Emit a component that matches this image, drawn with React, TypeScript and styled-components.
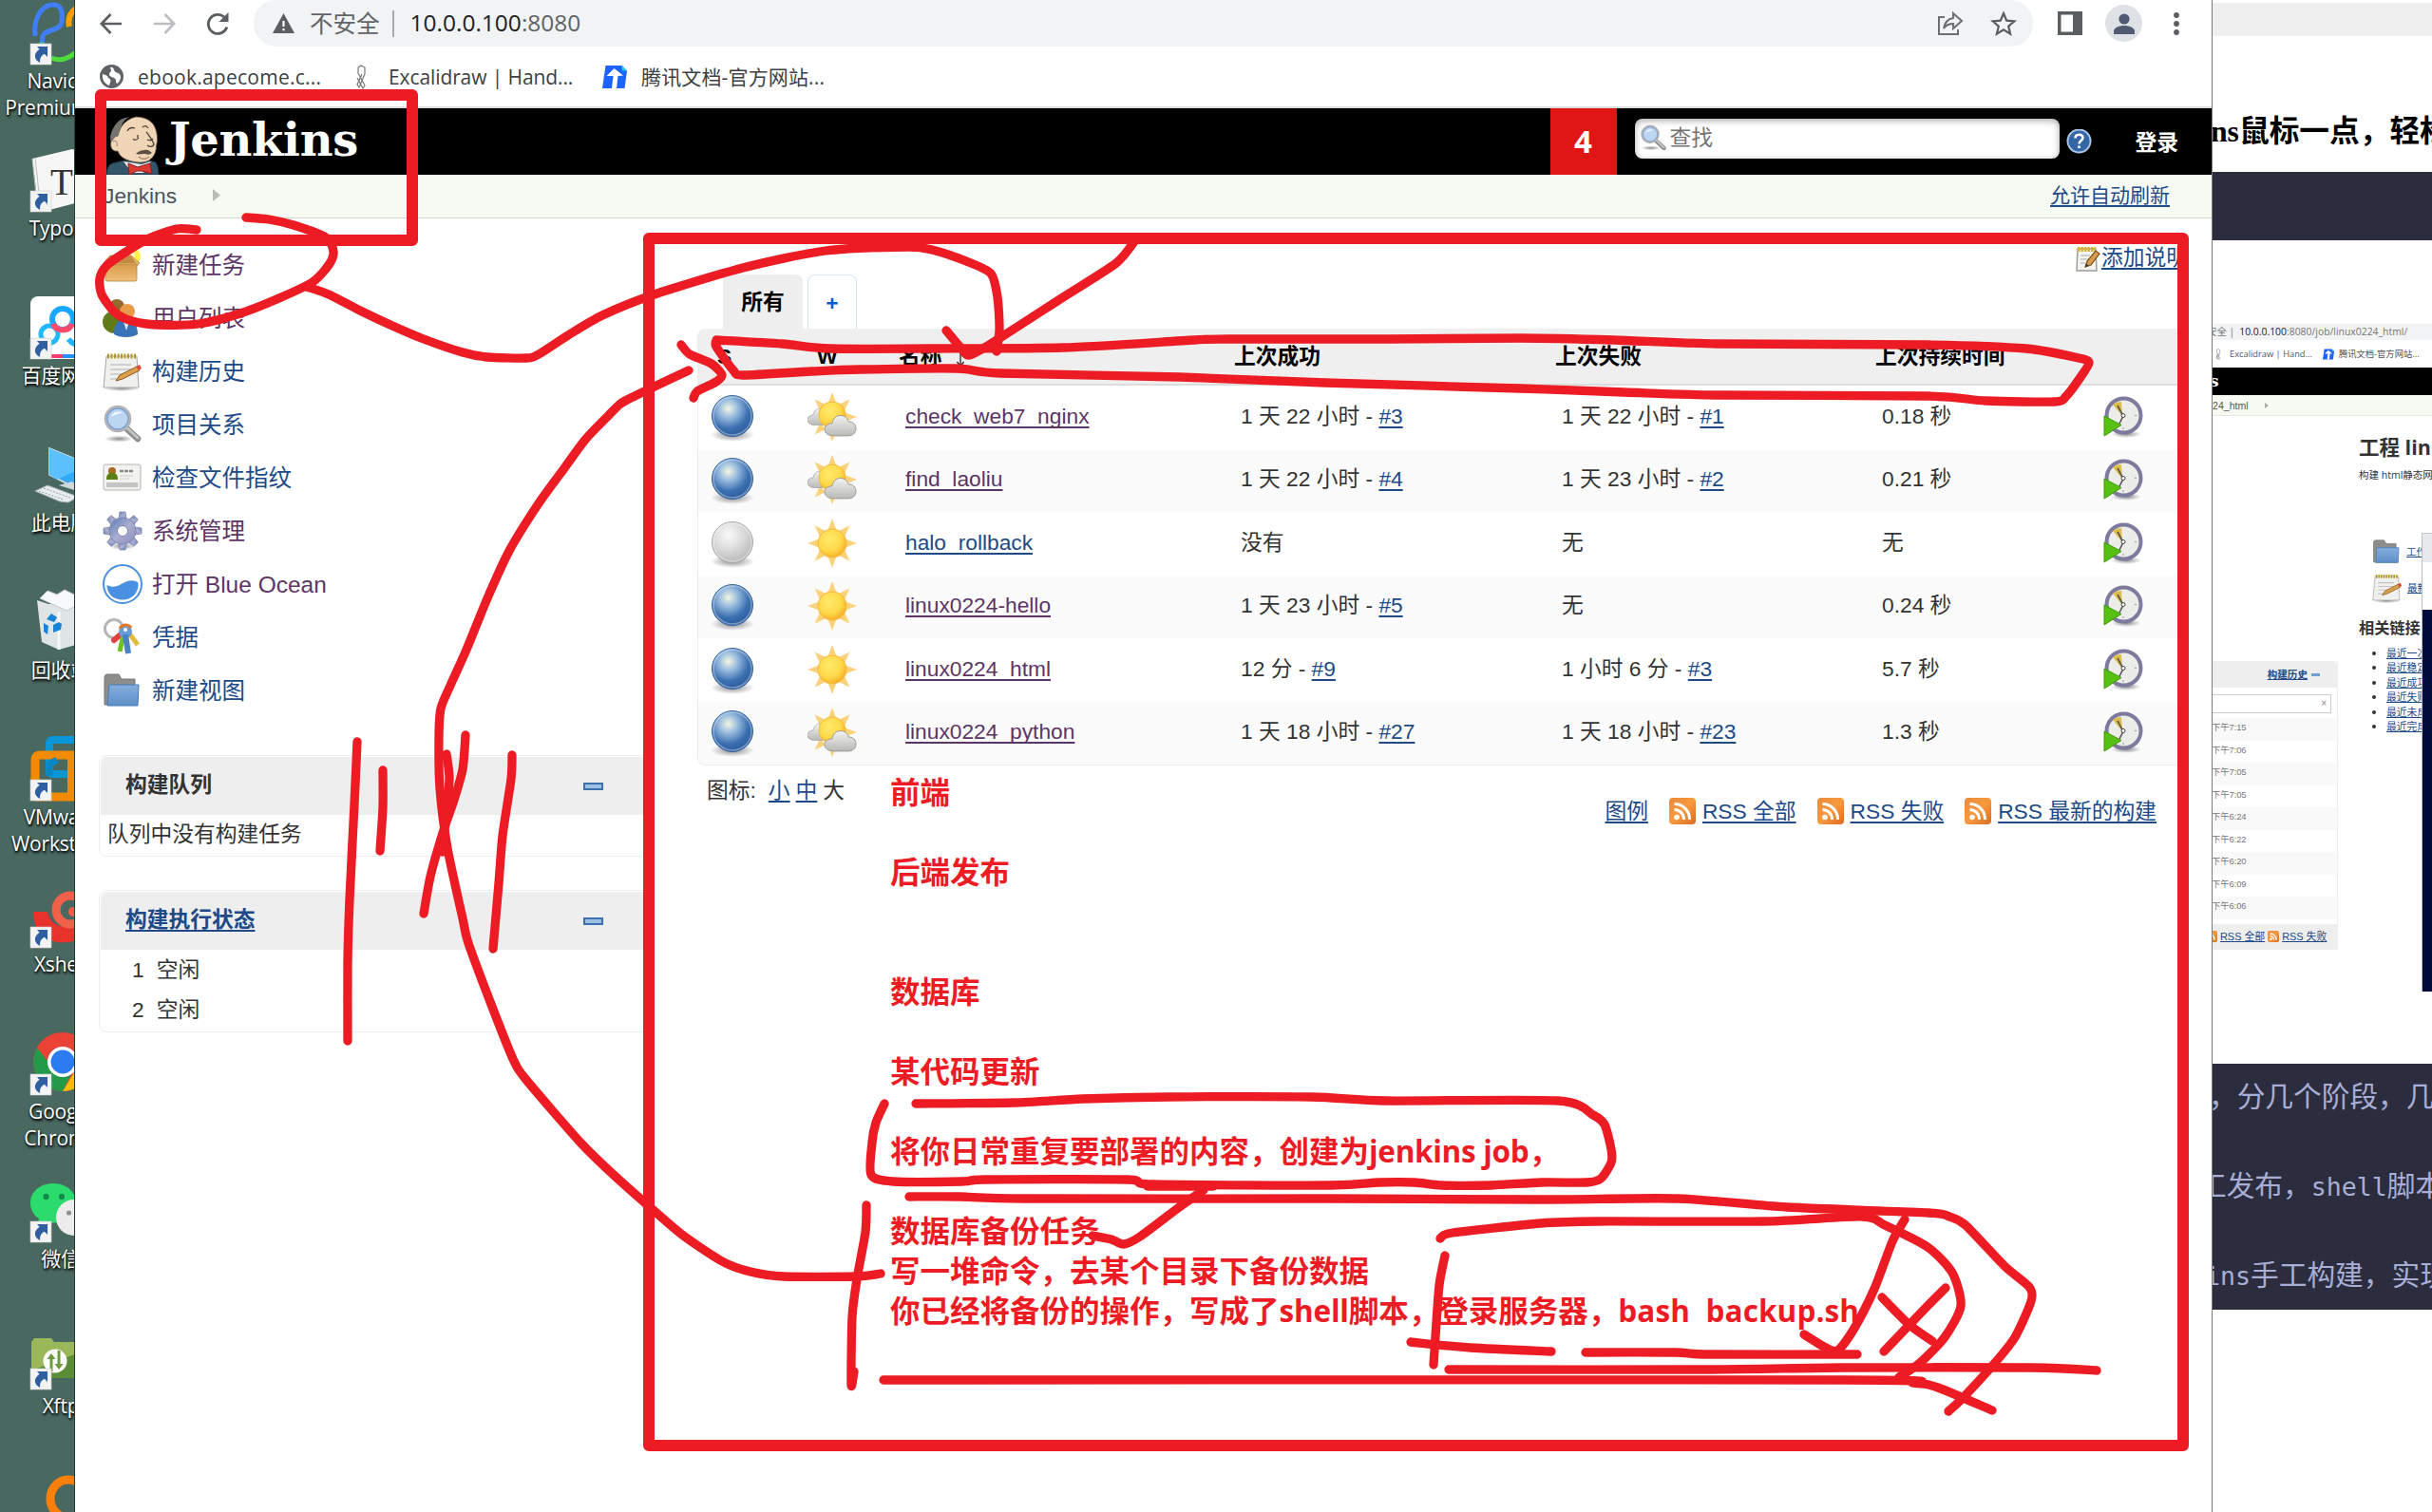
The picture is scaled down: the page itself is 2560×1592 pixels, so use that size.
import React from "react";
import styled, { createGlobalStyle } from "styled-components";

const UI = `"Open Sans", "Noto Sans CJK SC", sans-serif`;
const PAGE = `"Liberation Sans", "Noto Sans CJK SC", sans-serif`;
const CJK = `"Noto Sans CJK SC", sans-serif`;
const RED = "#ed1c24";

const GlobalStyle = createGlobalStyle`
  html, body { margin: 0; padding: 0; background: #fff; }
  body { width: 2560px; height: 1592px; overflow: hidden; }
  * { box-sizing: border-box; }
  svg { display: block; flex: none; }
`;

/* ---------- shell ---------- */

const Screen = styled.div`
  position: relative;
  display: flex;
  width: 2560px;
  height: 1592px;
  overflow: hidden;
  background: #fff;
`;

const Desktop = styled.aside`
  flex: none;
  width: 78px;
  height: 1592px;
  padding-top: 4px;
  overflow: hidden;
  background: #49685f;
`;

const DesktopItem = styled.div`
  display: flex;
  flex-direction: column;
  align-items: center;
  width: 128px;
  height: 155px;
`;

const DesktopLabel = styled.div`
  margin-top: 3px;
  font: 21px/28px ${UI};
  letter-spacing: -0.2px;
  color: #fff;
  text-align: center;
  white-space: pre;
  text-shadow: 1px 2px 3px #000, 0 1px 2px rgba(0, 0, 0, 0.8);
`;

const Browser = styled.section`
  flex: none;
  display: flex;
  flex-direction: column;
  width: 2251px;
  height: 1592px;
  border-left: 1px solid #2a3a36;
  border-right: 1px solid #7b7b7b;
  background: #fff;
`;

/* ---------- browser chrome ---------- */

const Toolbar = styled.div`
  display: flex;
  align-items: center;
  height: 49px;
  padding-left: 24px;
`;

const NavIcons = styled.div`
  display: flex;
  gap: 28px;
  margin-right: 24px;
`;

const AddressBar = styled.div`
  display: flex;
  align-items: center;
  width: 1873px;
  height: 49px;
  padding: 0 17px 0 20px;
  border-radius: 24px;
  background: #f1f3f4;
  font: 24.5px/48px ${UI};
  color: #5f6368;
`;

const Insecure = styled.span`
  margin: -1px 0 0 16px;
  font-family: ${CJK};
`;

const AddressDivider = styled.i`
  width: 2px;
  height: 28px;
  margin: 0 17px 0 13px;
  background: #a6a9ad;
`;

const Url = styled.span`
  flex: 1;
  margin-top: -2px;
  letter-spacing: 0;
`;

const Host = styled.span`
  color: #202124;
`;

const BarIcons = styled.div`
  display: flex;
  gap: 28px;
`;

const WindowIcons = styled.div`
  display: flex;
  align-items: center;
  margin-left: 26px;
  gap: 24px;
`;

const Avatar = styled.div`
  display: flex;
  align-items: center;
  justify-content: center;
  width: 39px;
  height: 39px;
  border-radius: 50%;
  background: #dee1e6;
`;

const Bookmarks = styled.div`
  display: flex;
  align-items: center;
  height: 63px;
  padding-left: 26px;
  font: 21px/30px ${UI};
  color: #3c4043;
`;

const Bookmark = styled.div<{ $w: number; $gap: number; $ls: number }>`
  display: flex;
  align-items: center;
  gap: ${(p) => p.$gap}px;
  width: ${(p) => p.$w}px;
  letter-spacing: ${(p) => p.$ls}px;
  white-space: nowrap;
`;

/* ---------- Jenkins header ---------- */

const JHeader = styled.header`
  display: flex;
  align-items: center;
  height: 72px;
  padding-left: 31px;
  border-top: 2px solid #dadce0;
  background: #000;
`;

const Wordmark = styled.div`
  flex: 1;
  margin: -5px 0 0 10px;
  font: bold 48px/60px "DejaVu Serif", serif;
  letter-spacing: -0.4px;
  color: #fff;
`;

const AlertCount = styled.div`
  width: 70px;
  height: 70px;
  background: #e01616;
  font: bold 33px/69px ${UI};
  text-align: center;
  color: #fff;
`;

const SearchBox = styled.div`
  display: flex;
  align-items: center;
  gap: 3px;
  width: 447px;
  height: 42px;
  margin: -7px 7px 0 19px;
  padding-left: 5px;
  border-radius: 8px;
  background: #fff;
  box-shadow: inset 0 2px 7px rgba(0, 0, 0, 0.35);
  font: 22.75px/38px ${PAGE};
  color: #757575;
`;

const SearchHint = styled.span`
  margin-top: -2px;
`;

const Login = styled.div`
  margin: 2px 35px 0 46px;
  font: bold 22.75px/30px ${PAGE};
  color: #fff;
`;

const Crumbs = styled.nav`
  display: flex;
  align-items: center;
  justify-content: space-between;
  height: 46px;
  padding: 0 44px 2px 31px;
  border-bottom: 1px solid #d3d7cf;
  background: #f6faf2;
  font: 22.75px/30px ${PAGE};
  color: #4d545d;
`;

const CrumbPath = styled.div`
  display: flex;
  align-items: center;
  gap: 38px;
  margin-left: -1px;
`;

const Link = styled.a<{ $visited?: boolean }>`
  color: ${(p) => (p.$visited ? "#5c3566" : "#204a87")};
  text-decoration: underline;
  text-decoration-thickness: 2px;
  text-underline-offset: 3px;
  text-decoration-skip-ink: none;
`;

const RefreshLink = styled(Link)`
  font-size: 21px;
`;

/* ---------- Jenkins sidebar ---------- */

const Body = styled.div`
  display: flex;
  flex: 1;
`;

const Sidebar = styled.div`
  width: 604px;
  padding: 21px 0 0 25px;
`;

const Task = styled.div<{ $visited?: boolean }>`
  display: flex;
  align-items: center;
  gap: 10px;
  height: 56px;
  padding-left: 4px;
  font: 24.5px/36px ${PAGE};
  color: ${(p) => (p.$visited ? "#5c3566" : "#204a87")};
`;

const TaskText = styled.span`
  margin-top: 1px;
`;

const Pane = styled.div<{ $top: number }>`
  margin-top: ${(p) => p.$top}px;
  padding: 1px 0 0 1px;
  border: 1px solid #eee;
  border-radius: 8px;
  font: 22.75px/32px ${PAGE};
  color: #333;
`;

const PaneHead = styled.div`
  display: flex;
  align-items: center;
  justify-content: space-between;
  height: 61px;
  padding: 0 47px 3px 26px;
  border-radius: 7px 0 0 0;
  background: #eee;
  font-weight: bold;
`;

const Minus = styled.i`
  width: 21px;
  height: 8px;
  margin-top: 3px;
  border: 2px solid #3f6fae;
  background: #9cc0e4;
`;

const QueueText = styled.div`
  height: 43px;
  padding-left: 7px;
  line-height: 41px;
`;

const Executors = styled.div`
  padding-bottom: 2px;
`;

const Executor = styled.div`
  display: flex;
  gap: 13px;
  height: 42px;
  padding-left: 33px;
  line-height: 42px;
`;

/* ---------- Jenkins main panel ---------- */

const Main = styled.main`
  flex: 1;
  padding: 26px 25px 0 51px;
  font: 22.75px/32px ${PAGE};
  color: #333;
`;

const AddDescription = styled.div`
  display: flex;
  align-items: center;
  justify-content: flex-end;
  gap: 1px;
  height: 30px;
  padding-top: 3px;
`;

const DescriptionLink = styled(Link)`
  margin-top: -3px;
`;

const Tabs = styled.div`
  display: flex;
  gap: 5px;
  height: 60px;
  padding: 3px 0 0 27px;
  font-weight: bold;
  line-height: 58px;
  text-align: center;
`;

const Tab = styled.div`
  width: 84px;
  border-radius: 7px 7px 0 0;
  background: #eee;
  color: #000;
`;

const NewTab = styled.div`
  width: 52px;
  border: 1px solid #cfe6fa;
  border-bottom: 0;
  border-radius: 8px 8px 0 0;
  color: #0b5bd0;
`;

const Table = styled.div`
  border: 1px solid #ececec;
  border-top: 0;
  border-radius: 8px;
  overflow: hidden;
`;

const Row = styled.div<{ $alt?: boolean }>`
  display: grid;
  grid-template-columns: 105px 96px 353px 338px 337px 240px 1fr;
  align-items: center;
  height: 66.5px;
  padding-bottom: 1px;
  background: ${(p) => (p.$alt ? "#fbfbfb" : "#fff")};
`;

const HeadRow = styled(Row)`
  height: 60px;
  border-bottom: 2px solid #ddd;
  background: #efefef;
  font-weight: bold;
  color: #000;
`;

const Cell = styled.div<{ $left: number }>`
  padding-left: ${(p) => p.$left}px;
  white-space: nowrap;
`;

const TextCell = styled(Cell)`
  margin-top: -2px;
`;

const SortArrow = styled.svg`
  display: inline-block;
  margin-left: 14px;
  vertical-align: -4px;
`;

const TableFoot = styled.div`
  display: flex;
  justify-content: space-between;
  padding: 10px 33px 0 10px;
`;

const IconSizes = styled.div`
  display: flex;
  gap: 6px;
`;

const SizeLabel = styled.span`
  margin-right: 7px;
`;

const Feeds = styled.div`
  display: flex;
  align-items: center;
  gap: 22px;
  height: 32px;
  margin-top: 22px;
`;

const Feed = styled.span`
  display: flex;
  align-items: center;
  gap: 7px;
`;

/* ---------- document window on the right ---------- */

const Doc = styled.section`
  display: flex;
  flex-direction: column;
  flex: 1;
  min-width: 0;
  height: 1592px;
  overflow: hidden;
  background: #fff;
  white-space: nowrap;
`;

const DocBar = styled.div`
  flex: none;
  height: 35px;
  margin-top: 3px;
  background: #efefef;
`;

const DocTitle = styled.div`
  flex: none;
  height: 143px;
  padding-top: 78px;
  margin-left: -2px;
  font: bold 31.7px/46px "Liberation Serif", "Noto Sans CJK SC", serif;
  color: #000;
`;

const CodeStrip = styled.div`
  flex: none;
  height: 72px;
  background: #2b2d3e;
`;

const CodeBlock = styled.div`
  flex: none;
  height: 259px;
  margin-top: 76px;
  background: #2b2d3e;
  color: #a9aed6;
  font: 30px/94px "DejaVu Sans Mono", "Noto Sans CJK SC", monospace;
  overflow: hidden;
`;

const CodeLine = styled.div<{ $shift: number }>`
  height: 94px;
  margin-left: ${(p) => p.$shift}px;
  font-size: 29.7px;
  &:first-child { margin-top: -12px; }
`;

const Latin = styled.span`
  font-size: 26.6px;
`;

const Shot = styled.div`
  position: relative;
  flex: none;
  height: 703px;
  margin-top: 88px;
  font: 10.5px/16px ${UI};
  color: #333;
  overflow: hidden;
`;

const ShotUrl = styled.div`
  display: flex;
  gap: 5px;
  height: 17px;
  margin-left: -6px;
  background: #f1f3f4;
  font-size: 10.4px;
  color: #777;
`;

const ShotMarks = styled.div`
  display: flex;
  align-items: center;
  height: 29px;
  padding-left: 3px;
  font-size: 9.3px;
  color: #555;
`;

const ShotMark = styled.span<{ $left: number }>`
  margin-left: ${(p) => p.$left}px;
`;

const ShotHead = styled.div`
  height: 29px;
  background: #000;
  color: #fff;
  font: bold 17px/29px "DejaVu Serif", serif;
  text-indent: -3px;
`;

const ShotCrumb = styled.div`
  display: flex;
  align-items: center;
  gap: 17px;
  height: 22px;
  border-bottom: 1px solid #e6e9e2;
  background: #f6faf2;
  font: 10.6px/20px ${PAGE};
  color: #555;
`;

const ShotBody = styled.div`
  display: flex;
`;

const History = styled.div`
  flex: none;
  width: 132px;
  margin-top: 258px;
  border-right: 1px solid #eee;
`;

const HistoryHead = styled.div`
  display: flex;
  align-items: center;
  justify-content: flex-end;
  gap: 4px;
  height: 28px;
  padding-right: 18px;
  background: #eee;
  border-radius: 0 4px 0 0;
  font: bold 10.6px/18px ${PAGE};
`;

const HistoryDash = styled.i`
  width: 9px;
  height: 3px;
  background: #6f9fd0;
`;

const HistoryFind = styled.div`
  width: 125px;
  height: 20px;
  margin: 7px 0 5px;
  padding-right: 4px;
  border: 1px solid #ccc;
  border-left: 0;
  font: 10px/18px ${PAGE};
  text-align: right;
  color: #888;
`;

const HistoryRow = styled.div<{ $alt: boolean }>`
  height: 23.5px;
  background: ${(p) => (p.$alt ? "#fff" : "#f9f9f9")};
  font: 9.4px/19px ${PAGE};
  letter-spacing: -0.1px;
  text-indent: -1px;
  color: #777;
`;

const HistoryFoot = styled.div`
  display: flex;
  align-items: center;
  gap: 3px;
  height: 27px;
  margin-top: 5px;
  padding-left: 0;
  margin-left: -7px;
  background: #eee;
  font: 10.9px/20px ${PAGE};
`;

const Project = styled.div`
  flex: none;
  padding: 17px 0 0 22px;
  font: 10.5px/16px ${UI};
`;

const ProjectTitle = styled.div`
  font: bold 21.5px/32px ${UI};
`;

const ProjectNote = styled.div`
  margin-top: 5px;
`;

const Artifact = styled.div<{ $top: number }>`
  display: flex;
  align-items: center;
  gap: 5px;
  height: 32px;
  margin: ${(p) => p.$top}px 0 0 14px;
`;

const Related = styled.div`
  margin-top: 9px;
  font: bold 16.2px/32px ${CJK};
`;

const Permalinks = styled.ul`
  margin: 4px 0 0;
  padding: 0 0 0 29px;
  font: 10.8px/15.4px ${CJK};
`;

const SmallLink = styled(Link)`
  text-decoration-thickness: 1px;
  text-underline-offset: 1px;
`;

const Inset = styled.div`
  position: absolute;
  left: 220px;
  top: 220px;
  width: 11px;
  height: 483px;
  border-left: 1px solid #b9bcc4;
  border-top: 1px solid #c6c9cf;
  background: linear-gradient(#e6e9ee 0 30px, #fff 30px 80px, #000b3c 80px);
`;

/* ---------- handwriting over the page ---------- */

const Ink = styled.svg`
  position: absolute;
  inset: 0;
  fill: none;
  stroke: ${RED};
  stroke-width: 9.3;
  stroke-linecap: round;
  stroke-linejoin: round;
  pointer-events: none;
`;

const Notes = styled.div`
  position: absolute;
  left: 937px;
  top: 813px;
  font: bold 31.5px/42px ${UI};
  color: ${RED};
  white-space: pre;
`;

const NoteLine = styled.div`
  height: 42px;
`;

const NoteLatin = styled.span<{ $ls: number }>`
  letter-spacing: ${(p) => p.$ls}px;
`;

type Pt = [number, number];

/** Catmull-Rom spline through the pen's sample points. */
function spline(p: Pt[]): string {
  let d = `M${p[0][0]} ${p[0][1]}`;
  for (let i = 0; i < p.length - 1; i++) {
    const a = p[i - 1] ?? p[i];
    const b = p[i];
    const c = p[i + 1];
    const e = p[i + 2] ?? c;
    const k = 8;
    d += `C${b[0] + (c[0] - a[0]) / k} ${b[1] + (c[1] - a[1]) / k} ${c[0] - (e[0] - b[0]) / k} ${
      c[1] - (e[1] - b[1]) / k
    } ${c[0]} ${c[1]}`;
  }
  return d;
}

const strokes: Pt[][] = [
  [[207, 242], [186, 241], [159, 250], [136, 263], [113, 279], [105, 293], [107, 310], [121, 329], [139, 338], [166, 342], [209, 341], [253, 330], [296, 313], [329, 297], [346, 279], [351, 265], [343, 250], [309, 237], [283, 231], [259, 229]],
  [[323, 302], [346, 310], [379, 327], [413, 343], [446, 357], [487, 371], [513, 376], [554, 377], [567, 373], [598, 353], [634, 332], [689, 310], [782, 282], [869, 264], [956, 260], [981, 263], [1017, 275], [1043, 288], [1050, 313], [1052, 347], [1049, 370]],
  [[996, 348], [1012, 367], [1020, 374], [1043, 362], [1119, 313], [1175, 277], [1195, 253]],
  [[754, 358], [823, 362], [874, 367], [976, 367], [1119, 366], [1257, 358], [1293, 357], [1460, 357], [1600, 356], [1698, 358], [1808, 362], [2029, 363], [2133, 367], [2188, 377], [2199, 382], [2188, 400], [2175, 417], [2163, 423], [2090, 422], [2029, 417], [1808, 416], [1710, 413], [1600, 409], [1395, 403], [1242, 397], [1053, 393], [1007, 388], [905, 389], [854, 391], [782, 395], [772, 390], [754, 365], [754, 358]],
  [[717, 363], [726, 373], [749, 383], [760, 395], [752, 403], [734, 412], [730, 419]],
  [[725, 390], [691, 406], [660, 421], [652, 426], [641, 437], [616, 463], [594, 493], [567, 530], [536, 580], [513, 630], [491, 684], [473, 724], [464, 746], [462, 775], [463, 830], [471, 893], [487, 967], [493, 993], [518, 1060], [540, 1115], [554, 1137], [612, 1204], [647, 1238], [683, 1270], [718, 1300], [760, 1328], [790, 1339], [825, 1344], [900, 1344], [927, 1341]],
  [[376, 781], [373, 847], [368, 947], [366, 1013], [366, 1096]],
  [[403, 811], [403, 850], [400, 896]],
  [[490, 774], [487, 810], [478, 842], [466, 877], [453, 923], [446, 962]],
  [[470, 794], [473, 820], [469, 863], [466, 897]],
  [[539, 795], [538, 820], [529, 880], [525, 930], [519, 999]],
  [[964, 1162], [1067, 1161], [1140, 1157], [1230, 1155], [1380, 1155], [1459, 1159], [1640, 1159], [1677, 1174], [1689, 1184], [1696, 1210], [1696, 1224], [1685, 1241], [1670, 1245], [1622, 1245], [1570, 1248], [1518, 1248], [1489, 1245], [1452, 1245], [1400, 1248], [1213, 1247], [1187, 1242], [1037, 1242], [1013, 1244], [940, 1244], [917, 1237], [918, 1203], [922, 1182], [931, 1162]],
  [[1208, 1249], [1277, 1249]],
  [[1267, 1253], [1240, 1272], [1200, 1302], [1183, 1310], [1170, 1305], [1150, 1301]],
  [[957, 1260], [1010, 1260], [1080, 1262], [1400, 1262], [1622, 1263], [1766, 1262], [1881, 1271], [2030, 1277], [2052, 1281], [2069, 1290], [2110, 1333], [2136, 1355], [2138, 1370], [2121, 1408], [2099, 1436], [2066, 1472], [2051, 1486]],
  [[912, 1269], [911, 1297], [902, 1347], [897, 1387], [896, 1458], [899, 1444]],
  [[930, 1453], [1940, 1453], [2014, 1456], [2040, 1461], [2097, 1485]],
  [[1516, 1304], [1529, 1298], [1622, 1288], [1681, 1286], [1855, 1286], [1960, 1281], [1984, 1290], [2029, 1313], [2055, 1340], [2064, 1375], [2047, 1408], [2021, 1435], [1999, 1450]],
  [[1521, 1322], [1515, 1353], [1511, 1407], [1509, 1437]],
  [[1485, 1413], [1548, 1419], [1633, 1423]],
  [[1669, 1424], [1763, 1424], [1799, 1426], [1955, 1426]],
  [[2005, 1284], [1992, 1307], [1973, 1357], [1951, 1400], [1934, 1422], [1920, 1418], [1899, 1405]],
  [[2048, 1356], [2029, 1375], [1983, 1423]],
  [[1981, 1366], [2010, 1395], [2034, 1412]],
  [[1525, 1442], [1799, 1442], [1940, 1440], [2140, 1440], [2207, 1443]],
];

/* ---------- icons ---------- */

const Shortcut = () => (
  <g>
    <rect x="0" y="42" width="22" height="22" fill="#f3f3f3" stroke="#cfcfcf" strokeWidth="0.6" />
    <path d="M7 45h11v11l-3.2-3.2c-4 2-5 5-4.600 9.200C4 59 2.500 53 9.500 47.800z" fill="#2f5f9f" />
  </g>
);

const desktopArt: Record<string, React.ReactNode> = {
  navicat: (
    <>
      <path d="M5 34C3 18 10 2 23 1c11-1 11 10 10 18-2 9-13 8-18 12-4 4-2 9-3 14" fill="none" stroke="#3f7fff" strokeWidth="5" />
      <path d="M12 40v10" stroke="#39b0a0" strokeWidth="5" />
      <path d="M41 24c-2-8 1-15 8-20" fill="none" stroke="#ffa000" strokeWidth="6" />
      <path d="M22 57c10 4 20 0 28-8" fill="none" stroke="#4ddb3d" strokeWidth="5" />
    </>
  ),
  typora: (
    <>
      <path d="M2 8L44-2l14 4v50L20 62 8 58z" fill="#f6f6f6" />
      <path d="M2 8l5 48M5 7l5 46" stroke="#bdbdbd" fill="none" />
      <text x="21" y="46" fontFamily="Liberation Serif, serif" fontSize="39" fill="#333">T</text>
    </>
  ),
  baidu: (
    <>
      <rect x="0" y="-2" width="66" height="66" rx="8" fill="#fff" />
      <circle cx="20" cy="38" r="9" fill="none" stroke="#22b8ff" strokeWidth="5" />
      <circle cx="34" cy="22" r="11" fill="none" stroke="#1aa7ff" strokeWidth="6" />
      <path d="M24 27a11 11 0 0 0 20 0" fill="none" stroke="#ff4a6e" strokeWidth="6" />
      <path d="M40 43c4 5 8 7 14 6" stroke="#22b8ff" strokeWidth="6" fill="none" />
      <path d="M22 61h12" stroke="#ff3b6b" strokeWidth="4" />
      <path d="M34 61h20" stroke="#1e90ff" strokeWidth="4" />
    </>
  ),
  computer: (
    <>
      <path d="M20 3l42 17v32L20 31z" fill="#36a9f5" stroke="#dfe6ea" strokeWidth="1.500" />
      <path d="M20 3l42 17-34 16-8-5z" fill="#5cc0ff" />
      <path d="M30 42l14-4 12 12z" fill="#cfd8dc" />
      <path d="M5 48l13-6 32 12-10 6-9-1z" fill="#e9edf0" stroke="#a8b2b8" />
      <path d="M9 48l26 9M14 45l28 10" stroke="#9aa5ab" strokeDasharray="2 1.500" />
    </>
  ),
  recycle: (
    <>
      <path d="M7 8l12 4 38-3-9 46-18 5-18-8z" fill="#dfe4e6" />
      <path d="M10 6l8-8 10 4 8-5 12 6 6 8-16 8z" fill="#f8f9fa" stroke="#c3c9cc" />
      <path d="M30 20v40" stroke="#f5f7f8" strokeWidth="3" />
      <path d="M17 28l5-6 6 4-3 5zM14 32l5 3-1 9-4-3zM24 42l8-3 1-6-3-2-6 3z" fill="#1583d6" />
    </>
  ),
  vmware: (
    <>
      <rect x="20" y="0" width="50" height="36" rx="3" fill="none" stroke="#0a95d6" strokeWidth="8" />
      <path d="M5 60V21q0-5 5-5h36M5 60h44" fill="none" stroke="#f38b00" strokeWidth="9" />
      <path d="M43 14v46" stroke="#f38b00" strokeWidth="8" />
      <path d="M20 38V26l8-5" fill="none" stroke="#0a86c4" strokeWidth="7" />
    </>
  ),
  xshell: (
    <>
      <path d="M3 26h15c1 8 8 16 20 16h16v12c-14 6-30 6-40-2C6 45 3 36 3 26z" fill="#e8332c" />
      <circle cx="42" cy="24" r="15" fill="none" stroke="#f0604a" strokeWidth="9" />
      <circle cx="45" cy="26" r="5" fill="#f0604a" />
    </>
  ),
  chrome: (
    <>
      <circle cx="34" cy="29" r="31" fill="#ea4335" />
      <path d="M7 14a31 31 0 0 0 27 46l10-20-20-4z" fill="#23994a" />
      <path d="M34 60a31 31 0 0 0 29-42H34l12 22z" fill="#fbbc05" />
      <circle cx="34" cy="29" r="16" fill="#fff" />
      <circle cx="34" cy="29" r="12.500" fill="#2a7cf0" />
    </>
  ),
  wechat: (
    <>
      <path d="M24 2C10 2 0 11 0 23c0 7 4 13 9 16l-2 8 9-4c16 3 32-6 32-20C48 11 38 2 24 2z" fill="#2bdc6c" />
      <ellipse cx="16.500" cy="16" rx="3" ry="3.300" fill="#128a48" />
      <ellipse cx="33" cy="16" rx="3" ry="3.300" fill="#128a48" />
      <circle cx="46" cy="38" r="19" fill="#ececec" />
      <circle cx="40.500" cy="33" r="2.600" fill="#8f8f8f" />
    </>
  ),
  xftp: (
    <>
      <path d="M1 14l3-4h18l3 4h40v38H1z" fill="#9ab85a" />
      <path d="M1 44l64-24v32H1z" fill="#5b8c36" />
      <circle cx="26" cy="34" r="12.500" fill="#fff" />
      <path d="M22 45V28M30 23v17" stroke="#6c9b3f" strokeWidth="3" />
      <path d="M17.500 32L22 26l4.500 6zM25.500 37l4.500 6 4.500-6z" fill="#6c9b3f" />
    </>
  ),
  ring: <ellipse cx="40" cy="24" rx="19" ry="20" fill="none" stroke="#ff7f0a" strokeWidth="9" />,
};

const desktopItems: { art: string; label: string; link: boolean }[] = [
  { art: "navicat", label: "Navicat\nPremium 16", link: true },
  { art: "typora", label: "Typora", link: true },
  { art: "baidu", label: "百度网盘", link: true },
  { art: "computer", label: "此电脑", link: false },
  { art: "recycle", label: "回收站", link: false },
  { art: "vmware", label: "VMware\nWorkstatio", link: true },
  { art: "xshell", label: "Xshell", link: true },
  { art: "chrome", label: "Google\nChrome", link: true },
  { art: "wechat", label: "微信", link: true },
  { art: "xftp", label: "Xftp", link: true },
  { art: "ring", label: "", link: false },
];

const GradientDefs = styled.svg`
  position: absolute;
  width: 0;
  height: 0;
`;

const Grads = () => (
  <GradientDefs>
    <defs>
      <radialGradient id="ballBlue" cx="0.4" cy="0.32" r="0.7">
        <stop offset="0" stopColor="#f4f6e0" />
        <stop offset="0.3" stopColor="#9fc0e0" />
        <stop offset="0.7" stopColor="#3a6fb0" />
        <stop offset="1" stopColor="#2d5c9c" />
      </radialGradient>
      <radialGradient id="ballGrey" cx="0.4" cy="0.32" r="0.75">
        <stop offset="0" stopColor="#fafafa" />
        <stop offset="0.5" stopColor="#dadada" />
        <stop offset="1" stopColor="#b2b2b2" />
      </radialGradient>
      <radialGradient id="sun" cx="0.4" cy="0.35" r="0.7">
        <stop offset="0" stopColor="#ffe96b" />
        <stop offset="0.6" stopColor="#ffd94a" />
        <stop offset="1" stopColor="#f7a823" />
      </radialGradient>
      <radialGradient id="shade">
        <stop offset="0" stopColor="#000" stopOpacity="0.45" />
        <stop offset="1" stopColor="#000" stopOpacity="0" />
      </radialGradient>
      <linearGradient id="cloud" x1="0" y1="0" x2="0" y2="1">
        <stop offset="0" stopColor="#f2f2f0" />
        <stop offset="1" stopColor="#b9b9b6" />
      </linearGradient>
      <linearGradient id="folder" x1="0" y1="0" x2="0" y2="1">
        <stop offset="0" stopColor="#84aede" />
        <stop offset="1" stopColor="#5f8fc8" />
      </linearGradient>
      <linearGradient id="gear" x1="0" y1="0" x2="1" y2="1">
        <stop offset="0" stopColor="#5f7fb4" />
        <stop offset="0.5" stopColor="#a9aed2" />
        <stop offset="1" stopColor="#8e90bd" />
      </linearGradient>
      <linearGradient id="rss" x1="0" y1="0" x2="1" y2="1">
        <stop offset="0" stopColor="#e98a3c" />
        <stop offset="0.5" stopColor="#f79a3e" />
        <stop offset="1" stopColor="#dc6a22" />
      </linearGradient>
      <linearGradient id="box" x1="0" y1="0" x2="0" y2="1">
        <stop offset="0" stopColor="#d79a48" />
        <stop offset="1" stopColor="#f0c07c" />
      </linearGradient>
    </defs>
  </GradientDefs>
);

const Ball = ({ grey }: { grey?: boolean }) => (
  <svg width="48" height="56" viewBox="0 0 48 56">
    <ellipse cx="24" cy="47" rx="23" ry="7" fill="url(#shade)" />
    <circle cx="24" cy="27" r="21.500" fill={grey ? "url(#ballGrey)" : "url(#ballBlue)"} stroke={grey ? "#a9a9a9" : "#3465a4"} />
    <circle cx="24" cy="27" r="20" fill="none" stroke="#fff" strokeOpacity="0.35" strokeWidth="1.500" />
  </svg>
);

const Rays = () => (
  <g fill="#fbd27a">
    {[0, 45, 90, 135, 180, 225, 270, 315].map((a) => (
      <path key={a} d="M21.500 12L26 0l4.500 12z" transform={`rotate(${a} 26 26)`} />
    ))}
  </g>
);

const Sunny = () => (
  <svg width="52" height="52" viewBox="0 0 52 52">
    <Rays />
    <circle cx="26" cy="26" r="15" fill="url(#sun)" stroke="#f6bb3c" />
  </svg>
);

const cloudPath = "M10 30c-6 0-10-3-10-7.500S4 16 8 16c1-6 5-9 9-9 5 0 8 3 9 7 5 0 8 3 8 8s-4 8-8 8z";

const PartlyCloudy = () => (
  <svg width="52" height="52" viewBox="0 0 52 52">
    <Rays />
    <path d={cloudPath} fill="url(#cloud)" stroke="#a5a5a2" transform="translate(0 12) scale(0.75)" />
    <circle cx="26" cy="24" r="14" fill="url(#sun)" stroke="#f6bb3c" />
    <path d={cloudPath} fill="url(#cloud)" stroke="#989895" transform="translate(18 18) scale(0.97 0.93)" />
  </svg>
);

const Schedule = () => (
  <svg width="42" height="44" viewBox="0 0 42 44">
    <ellipse cx="24" cy="40" rx="16" ry="4" fill="url(#shade)" />
    <circle cx="21.500" cy="20.500" r="18" fill="#ecece8" stroke="#7d7b9d" strokeWidth="4" />
    <path d="M20 21L10 9c3-2 5-3 9-3z" fill="#e0bd4a" />
    <path d="M15 10l6 11-4 8" fill="none" stroke="#555" strokeWidth="1.600" />
    <circle cx="21" cy="20.500" r="2" fill="#fff" stroke="#444" />
    <path d="M33 20.500h2M21 33v2" stroke="#999" />
    <path d="M1 21l18 9.500L1 42z" fill="#57c113" stroke="#3f9a08" />
  </svg>
);

const NotePad = ({ w, h }: { w: number; h: number }) => (
  <svg width={w} height={h} viewBox="0 0 42 42" preserveAspectRatio="none">
    <ellipse cx="20" cy="39" rx="19" ry="3" fill="url(#shade)" />
    <path d="M4 5h32l2 33H1z" fill="#f0f0ee" stroke="#a8a8a5" />
    <path d="M8 14h22M8 19h24M8 24h14M8 29h10" stroke="#c5c5c5" strokeWidth="1.500" />
    <path d="M5 5h30" stroke="#b59a2a" strokeWidth="5" strokeDasharray="2 1.500" />
    <path d="M14 31l4-6 18-9 3 4-18 9z" fill="#dca04a" stroke="#8a5a1c" />
    <path d="M35 16l4-2 2 4-3 2z" fill="#e04a3c" />
  </svg>
);

const EditNote = () => (
  <svg width="26" height="28" viewBox="0 0 26 28">
    <path d="M2 3h19l1 23H1z" fill="#f4f4f1" stroke="#9a9a96" strokeWidth="1.400" />
    <path d="M5 10h10M5 14h8M5 18h5" stroke="#c2c2c2" strokeWidth="1.400" />
    <path d="M2 3.500h19" stroke="#d9b42c" strokeWidth="5" strokeDasharray="2.500 1" />
    <path d="M10 22l2-6L21 5l4 3-9 12z" fill="#d79b4d" stroke="#7a4f1b" strokeWidth="1.200" />
    <path d="M10 22l1.200-3.500 2.300 2z" fill="#333" />
  </svg>
);

const Magnifier = ({ s }: { s: number }) => (
  <svg width={s} height={s} viewBox="0 0 42 42">
    <ellipse cx="17" cy="36" rx="15" ry="3.500" fill="url(#shade)" />
    <path d="M24 24l13 12" stroke="#8d8d8d" strokeWidth="6.500" strokeLinecap="round" />
    <path d="M25 24l12 11" stroke="#c4c4c4" strokeWidth="3" strokeLinecap="round" />
    <circle cx="16" cy="15" r="12.500" fill="#bcd6f2" stroke="#b4b4b4" strokeWidth="3.600" />
    <circle cx="16" cy="15" r="11" fill="none" stroke="#7da3d6" strokeWidth="1.400" />
    <path d="M9 13c1-5 8-7 12-4-4 0-8 2-12 4z" fill="#eef6ff" />
  </svg>
);

const Folder = ({ w, h }: { w: number; h: number }) => (
  <svg width={w} height={h} viewBox="0 0 42 42" preserveAspectRatio="none">
    <path d="M2 8c0-3 1-4 3-4h12l3 5h14v27H2z" fill="#8d8d8b" stroke="#777" />
    <path d="M7 15h31l-1 22H5z" fill="url(#folder)" stroke="#4a7ab4" />
  </svg>
);

const Rss = ({ s }: { s: number }) => (
  <svg width={s} height={s} viewBox="0 0 28 28">
    <rect width="28" height="28" rx="4" fill="url(#rss)" />
    <circle cx="8" cy="20.500" r="2.800" fill="#fff" />
    <path d="M5.500 12.500a10 10 0 0 1 10 10.500M5.500 6.500A16 16 0 0 1 21.500 23" fill="none" stroke="#fff" strokeWidth="3" />
  </svg>
);

const Tencent = ({ s }: { s: number }) => (
  <svg width={s} height={s} viewBox="0 0 26 24">
    <path d="M3.500 0h17l5.500 5.500L23.500 24H0z" fill="#1d63ff" />
    <path d="M20.500 0L26 5.500h-5z" fill="#1fd0e8" />
    <path d="M4.500 11l8-8 9.500 7.500-5.500.5L15 24h-5l1.500-13z" fill="#fff" />
  </svg>
);

const Crayon = ({ w, h }: { w: number; h: number }) => (
  <svg width={w} height={h} viewBox="0 0 13 26">
    <path d="M3 3l3-2 4 2v7L4 24 2 21l5-11M3 3v6l7 13-2 3-6-11" fill="none" stroke="#777" strokeWidth="1.200" />
  </svg>
);

const Butler = () => (
  <svg width="58" height="70" viewBox="0 0 58 70">
    <path d="M2 70C3 61 5 58 12 57l8-2 28 0 6 2c2 3 3 8 3 13z" fill="#34566a" stroke="#1d2f3b" />
    <path d="M14 29C16 20 21 12 33 9c11 0 18 5 20.500 12C56 28 56 34 54.500 40c0 7-3 12-8.500 15.500-5 2-11 2-17 .5-8-2-13-5-15-11-4 1-7.500-2-7.500-7s3-9 7.500-9z" fill="#f0d6b7" stroke="#5b4a3d" strokeWidth="0.800" />
    <path d="M7 36c-2-6 0-12 4-18C14 13 19 10 26 9.500c-5 3-7 5-8 9l-4 11-3 1z" fill="#77736f" />
    <path d="M9 35c3-2 5 1 4 5" stroke="#a07c5c" fill="none" />
    <path d="M24 24c2-4 5-4 8-3M40 20c2-2 4-2 6 1M30 32c1 2 4 2 6-1M35 28v3M45 33c2 1 4 1 6-1M44 25c3 4 7 9 8 13-1 3-4 3-7 1" fill="none" stroke="#4a3f38" strokeWidth="1.300" />
    <path d="M33 48c3-3 6-4 9-4 3-1 5 0 8 3-3 3-6 1-8 1-3 0-6 1-9 0z" fill="#5e5046" />
    <path d="M36 51c3 3 8 3 11 0" stroke="#8e5b49" fill="none" />
    <path d="M20 56l9 12h12l8-12-10 3z" fill="#e9eef0" />
    <path d="M25 58l10 4 3-1 10-3 2 11-11-3h-5l-8 4z" fill="#d93a34" stroke="#8f1c1a" />
  </svg>
);

const NewItem = () => (
  <svg width="42" height="42" viewBox="0 0 42 42">
    <circle cx="31" cy="12" r="9" fill="#fff04a" />
    <circle cx="30" cy="11" r="4" fill="#fffbc0" />
    <path d="M0 20l8-9h22l9 8-4 4H4z" fill="#e6b878" stroke="#b9833c" strokeWidth="0.800" />
    <path d="M8 11l22 0 5 8H6z" fill="#c38a42" />
    <path d="M3 20h33v16q0 2-2 2H5q-2 0-2-2z" fill="url(#box)" stroke="#b9833c" strokeWidth="0.800" />
  </svg>
);

const People = () => (
  <svg width="42" height="42" viewBox="0 0 42 42">
    <ellipse cx="13" cy="25" rx="13" ry="12" fill="#5f7a17" />
    <circle cx="15" cy="9" r="8" fill="#94692c" />
    <path d="M12 38c0-11 5-16 12-16s13 5 13 16c-6 4-19 4-25 0z" fill="#3a72b8" />
    <path d="M21 22l4 12 4-12z" fill="#dbe9f7" />
    <circle cx="26" cy="14" r="8" fill="#e79b48" />
  </svg>
);

const IdCard = () => (
  <svg width="42" height="42" viewBox="0 0 42 42">
    <rect x="1" y="7" width="39" height="27" rx="2" fill="#f2f2f0" stroke="#b4b4b0" />
    <rect x="4" y="26" width="33" height="5" fill="#c4c4c2" />
    <circle cx="10" cy="14" r="4" fill="#a66a24" />
    <path d="M4 23c0-6 2-7 6-7s6 1 6 7z" fill="#5d7d18" />
    <path d="M18 14h14" stroke="#888" strokeWidth="2.500" strokeDasharray="4 1" />
    <path d="M18 19h14M18 22h10" stroke="#ccc" />
  </svg>
);

const Gear = () => (
  <svg width="42" height="42" viewBox="0 0 42 42">
    <ellipse cx="21" cy="37" rx="14" ry="4" fill="url(#shade)" />
    <g fill="url(#gear)" stroke="#7d80ab" strokeWidth="0.800">
      {[0, 45, 90, 135, 180, 225, 270, 315].map((a) => (
        <path key={a} d="M17 9l1-8h6l1 8z" transform={`rotate(${a} 21 21)`} />
      ))}
      <circle cx="21" cy="21" r="14" />
    </g>
    <circle cx="21" cy="21" r="13" fill="url(#gear)" />
    <circle cx="21" cy="21" r="5.500" fill="#fff" stroke="#7d80ab" />
  </svg>
);

const Ocean = () => (
  <svg width="42" height="42" viewBox="0 0 42 42">
    <circle cx="21" cy="21" r="20" fill="#fff" stroke="#4a90e2" strokeWidth="2" />
    <path d="M4.500 22c6 3 10 2 15-1s12-6 18-1.500C38.500 30 31 37.500 21 37.500S4.500 31 4.500 22z" fill="#4a90e2" />
  </svg>
);

const Keys = () => (
  <svg width="42" height="42" viewBox="0 0 42 42">
    <circle cx="12" cy="12" r="9.500" fill="none" stroke="#b5b5b5" strokeWidth="3" />
    <path d="M12 24l7-6" stroke="#e04040" strokeWidth="6" strokeLinecap="round" />
    <path d="M22 18l-4 18" stroke="#6cc21e" strokeWidth="5" />
    <path d="M26 14l11 15" stroke="#e2bb3a" strokeWidth="5" />
    <circle cx="24" cy="15" r="7" fill="#6a9bd8" />
    <path d="M18 12a7 7 0 0 1 12-1" fill="none" stroke="#e07a2c" strokeWidth="3" />
    <path d="M24 18l3 20" stroke="#4a80c4" strokeWidth="6" />
    <circle cx="24" cy="13" r="2" fill="#fff" />
  </svg>
);

/* ---------- data ---------- */

const tasks: { icon: React.ReactNode; text: string; visited?: boolean }[] = [
  { icon: <NewItem />, text: "新建任务", visited: true },
  { icon: <People />, text: "用户列表", visited: true },
  { icon: <NotePad w={42} h={42} />, text: "构建历史" },
  { icon: <Magnifier s={42} />, text: "项目关系" },
  { icon: <IdCard />, text: "检查文件指纹" },
  { icon: <Gear />, text: "系统管理", visited: true },
  { icon: <Ocean />, text: "打开 Blue Ocean", visited: true },
  { icon: <Keys />, text: "凭据" },
  { icon: <Folder w={42} h={42} />, text: "新建视图" },
];

type Build = [string, string?];
const jobs: { name: string; visited: boolean; grey?: boolean; sunny: boolean; ok: Build; fail: Build; time: string }[] = [
  { name: "check_web7_nginx", visited: true, sunny: false, ok: ["1 天 22 小时", "#3"], fail: ["1 天 22 小时", "#1"], time: "0.18 秒" },
  { name: "find_laoliu", visited: true, sunny: false, ok: ["1 天 22 小时", "#4"], fail: ["1 天 23 小时", "#2"], time: "0.21 秒" },
  { name: "halo_rollback", visited: false, grey: true, sunny: true, ok: ["没有"], fail: ["无"], time: "无" },
  { name: "linux0224-hello", visited: true, sunny: true, ok: ["1 天 23 小时", "#5"], fail: ["无"], time: "0.24 秒" },
  { name: "linux0224_html", visited: true, sunny: true, ok: ["12 分", "#9"], fail: ["1 小时 6 分", "#3"], time: "5.7 秒" },
  { name: "linux0224_python", visited: true, sunny: false, ok: ["1 天 18 小时", "#27"], fail: ["1 天 18 小时", "#23"], time: "1.3 秒" },
];

const BuildText = ({ b }: { b: Build }) => (
  <>
    {b[0]}
    {b[1] && (
      <>
        {" - "}
        <Link>{b[1]}</Link>
      </>
    )}
  </>
);

const history = ["7:15", "7:06", "7:05", "7:05", "6:24", "6:22", "6:20", "6:09", "6:06"];
const permalinks = ["最近一次构建", "最近稳定构建", "最近成功的构建", "最近失败的构建", "最近未成功的构建", "最近完成的构建"];

/* ---------- sections ---------- */

const ChromeBar = () => (
  <>
    <Toolbar>
      <NavIcons>
        <svg width="28" height="28" viewBox="0 0 28 28" fill="none" stroke="#5a5d61" strokeWidth="2.600">
          <path d="M25 14H4M13.500 4L3.800 14l9.700 10" />
        </svg>
        <svg width="28" height="28" viewBox="0 0 28 28" fill="none" stroke="#bcbec1" strokeWidth="2.600">
          <path d="M3 14h21M14.500 4l9.700 10-9.700 10" />
        </svg>
        <svg width="28" height="28" viewBox="0 0 28 28">
          <path d="M23.800 17.500A10 10 0 1 1 21 7" fill="none" stroke="#5a5d61" strokeWidth="2.800" />
          <path d="M25.500 2v10h-10z" fill="#5a5d61" />
        </svg>
      </NavIcons>
      <AddressBar>
        <svg width="23" height="21" viewBox="0 0 23 21">
          <path d="M11.500 0L23 21H0z" fill="#5a5d61" />
          <path d="M11.500 8v6M11.500 16v2.300" stroke="#fff" strokeWidth="2.200" />
        </svg>
        <Insecure>不安全</Insecure>
        <AddressDivider />
        <Url>
          <Host>10.0.0.100</Host>:8080
        </Url>
        <BarIcons>
          <svg width="28" height="28" viewBox="0 0 28 28" fill="none" stroke="#6b6e72" strokeWidth="2">
            <path d="M8 7H2v18h20v-5" />
            <path d="M17 3l9 8-9 8v-5c-5 0-8 2-10 5 1-6 4-10 10-11z" />
          </svg>
          <svg width="28" height="28" viewBox="0 0 28 28" fill="none" stroke="#5a5d61" strokeWidth="2.200">
            <path d="M14 3l3.200 7.600 8.200.7-6.200 5.400 1.900 8L14 20.400l-7.100 4.300 1.900-8-6.200-5.400 8.200-.7z" />
          </svg>
        </BarIcons>
      </AddressBar>
      <WindowIcons>
        <svg width="26" height="25" viewBox="0 0 26 25">
          <path d="M0 0h26v25H0zM3.500 3.500v18H16v-18z" fill="#5a5d61" fillRule="evenodd" />
        </svg>
        <Avatar>
          <svg width="24" height="24" viewBox="0 0 24 24" fill="#4f5b72">
            <circle cx="12" cy="7" r="5.600" />
            <path d="M1 23v-3c0-4 6-6 11-6s11 2 11 6v3z" />
          </svg>
        </Avatar>
        <svg width="24" height="28" viewBox="0 0 24 28" fill="#5a5d61">
          <circle cx="12" cy="5" r="2.900" />
          <circle cx="12" cy="14" r="2.900" />
          <circle cx="12" cy="23" r="2.900" />
        </svg>
      </WindowIcons>
    </Toolbar>
    <Bookmarks>
      <Bookmark $w={269} $gap={15} $ls={0.25}>
        <svg width="25" height="25" viewBox="0 0 25 25">
          <circle cx="12.500" cy="12.500" r="12.500" fill="#5f6368" />
          <path d="M3 10c3 1 5 1 6 4 2 1 3 2 2 5l-1 3c-4-1-8-6-7-12zM11 3c5-1 3 4 6 5 2 1 5 1 5 5 0 3-2 6-4 7-2-2 0-5-3-6-2-1-5-1-5-4 0-2 2-2 2-4z" fill="#fff" />
        </svg>
        ebook.apecome.c...
      </Bookmark>
      <Bookmark $w={260} $gap={22} $ls={-0.1}>
        <Crayon w={13} h={26} />
        Excalidraw | Hand...
      </Bookmark>
      <Bookmark $w={260} $gap={15} $ls={0.15}>
        <Tencent s={26} />
        腾讯文档-官方网站...
      </Bookmark>
    </Bookmarks>
  </>
);

const JobTable = () => (
  <Table>
    <HeadRow>
      <Cell $left={20}>S</Cell>
      <Cell $left={20}>W</Cell>
      <Cell $left={10}>
        名称
        <SortArrow width="10" height="22" viewBox="0 0 10 22">
          <path d="M5 0v20M1.500 16L5 20.500 8.500 16" fill="none" stroke="#222" strokeWidth="1.300" />
        </SortArrow>
      </Cell>
      <Cell $left={10}>上次成功</Cell>
      <Cell $left={10}>上次失败</Cell>
      <Cell $left={10}>上次持续时间</Cell>
      <Cell $left={0} />
    </HeadRow>
    {jobs.map((j, i) => (
      <Row key={j.name} $alt={i % 2 === 1}>
        <Cell $left={12}>
          <Ball grey={j.grey} />
        </Cell>
        <Cell $left={10}>{j.sunny ? <Sunny /> : <PartlyCloudy />}</Cell>
        <TextCell $left={17}>
          <Link $visited={j.visited}>{j.name}</Link>
        </TextCell>
        <TextCell $left={17}>
          <BuildText b={j.ok} />
        </TextCell>
        <TextCell $left={17}>
          <BuildText b={j.fail} />
        </TextCell>
        <TextCell $left={17}>{j.time}</TextCell>
        <Cell $left={10}>
          <Schedule />
        </Cell>
      </Row>
    ))}
  </Table>
);

const Jenkins = () => (
  <>
    <JHeader>
      <Butler />
      <Wordmark>Jenkins</Wordmark>
      <AlertCount>4</AlertCount>
      <SearchBox>
        <Magnifier s={29} />
        <SearchHint>查找</SearchHint>
      </SearchBox>
      <svg width="27" height="27" viewBox="0 0 27 27">
        <circle cx="13.500" cy="12.500" r="12" fill="#3465a4" stroke="#a9c4e4" strokeWidth="2" />
        <path d="M9.500 9.500c0-5 8-5 8-.5 0 3-4 3-4 6.500M13.500 17.500v2.600" fill="none" stroke="#fff" strokeWidth="2.600" />
      </svg>
      <Login>登录</Login>
    </JHeader>
    <Crumbs>
      <CrumbPath>
        Jenkins
        <svg width="8" height="13" viewBox="0 0 8 13">
          <path d="M0 0l8 6.500L0 13z" fill="#babdb6" />
        </svg>
      </CrumbPath>
      <RefreshLink>允许自动刷新</RefreshLink>
    </Crumbs>
    <Body>
      <Sidebar>
        {tasks.map((t) => (
          <Task key={t.text} $visited={t.visited}>
            {t.icon}
            <TaskText>{t.text}</TaskText>
          </Task>
        ))}
        <Pane $top={40}>
          <PaneHead>
            构建队列
            <Minus />
          </PaneHead>
          <QueueText>队列中没有构建任务</QueueText>
        </Pane>
        <Pane $top={35}>
          <PaneHead>
            <Link>构建执行状态</Link>
            <Minus />
          </PaneHead>
          <Executors>
            <Executor>
              <span>1</span>空闲
            </Executor>
            <Executor>
              <span>2</span>空闲
            </Executor>
          </Executors>
        </Pane>
      </Sidebar>
      <Main>
        <AddDescription>
          <EditNote />
          <DescriptionLink>添加说明</DescriptionLink>
        </AddDescription>
        <Tabs>
          <Tab>所有</Tab>
          <NewTab>+</NewTab>
        </Tabs>
        <JobTable />
        <TableFoot>
          <IconSizes>
            <SizeLabel>图标:</SizeLabel>
            <Link>小</Link>
            <Link>中</Link>
            <span>大</span>
          </IconSizes>
          <Feeds>
            <Link>图例</Link>
            {["RSS 全部", "RSS 失败", "RSS 最新的构建"].map((f) => (
              <Feed key={f}>
                <Rss s={28} />
                <Link>{f}</Link>
              </Feed>
            ))}
          </Feeds>
        </TableFoot>
      </Main>
    </Body>
  </>
);

const DocWindow = () => (
  <Doc>
    <DocBar />
    <DocTitle>ns鼠标一点，轻松</DocTitle>
    <CodeStrip />
    <Shot>
      <ShotUrl>
        <span>安全 |</span>
        <span>
          <Host>10.0.0.100</Host>:8080/job/linux0224_html/
        </span>
      </ShotUrl>
      <ShotMarks>
        <Crayon w={6} h={12} />
        <ShotMark $left={9}>Excalidraw | Hand...</ShotMark>
        <ShotMark $left={11}>
          <Tencent s={12} />
        </ShotMark>
        <ShotMark $left={5}>腾讯文档-官方网站...</ShotMark>
      </ShotMarks>
      <ShotHead>s</ShotHead>
      <ShotCrumb>
        24_html
        <svg width="4" height="6" viewBox="0 0 4 6">
          <path d="M0 0l4 3-4 3z" fill="#aaa" />
        </svg>
      </ShotCrumb>
      <ShotBody>
        <History>
          <HistoryHead>
            <SmallLink>构建历史</SmallLink>
            <HistoryDash />
          </HistoryHead>
          <HistoryFind>×</HistoryFind>
          {history.map((h, i) => (
            <HistoryRow key={i} $alt={i % 2 === 1}>
              下午{h}
            </HistoryRow>
          ))}
          <HistoryFoot>
            <Rss s={12} />
            <SmallLink>RSS 全部</SmallLink>
            <Rss s={12} />
            <SmallLink>RSS 失败</SmallLink>
          </HistoryFoot>
        </History>
        <Project>
          <ProjectTitle>工程 linux0224</ProjectTitle>
          <ProjectNote>构建 html静态网站</ProjectNote>
          <Artifact $top={57}>
            <Folder w={31} h={30} />
            <SmallLink>工作空间</SmallLink>
          </Artifact>
          <Artifact $top={6}>
            <NotePad w={32} h={32} />
            <SmallLink>最新修改记录</SmallLink>
          </Artifact>
          <Related>相关链接</Related>
          <Permalinks>
            {permalinks.map((p) => (
              <li key={p}>
                <SmallLink>{p}</SmallLink>
              </li>
            ))}
          </Permalinks>
        </Project>
      </ShotBody>
      <Inset />
    </Shot>
    <CodeBlock>
      <CodeLine $shift={-4}>，分几个阶段，几</CodeLine>
      <CodeLine $shift={-15}>
        工发布，<Latin>shell</Latin>脚本
      </CodeLine>
      <CodeLine $shift={-8}>
        <Latin>ins</Latin>手工构建，实现
      </CodeLine>
    </CodeBlock>
  </Doc>
);

const Handwriting = () => (
  <>
    <Notes>
      <NoteLine>前端</NoteLine>
      <NoteLine />
      <NoteLine>后端发布</NoteLine>
      <NoteLine />
      <NoteLine />
      <NoteLine>数据库</NoteLine>
      <NoteLine />
      <NoteLine>某代码更新</NoteLine>
      <NoteLine />
      <NoteLine>
        将你日常重复要部署的内容，创建为<NoteLatin $ls={-0.3}>jenkins job</NoteLatin>，
      </NoteLine>
      <NoteLine />
      <NoteLine>数据库备份任务</NoteLine>
      <NoteLine>写一堆命令，去某个目录下备份数据</NoteLine>
      <NoteLine>
        你已经将备份的操作，写成了<NoteLatin $ls={-0.2}>shell</NoteLatin>脚本，登录服务器，<NoteLatin $ls={0.1}>bash  backup.sh</NoteLatin>
      </NoteLine>
    </Notes>
    <Ink width="2560" height="1592" viewBox="0 0 2560 1592">
      <rect x="106" y="100" width="328" height="153" strokeWidth="12" />
      <rect x="683" y="251" width="1615" height="1271" strokeWidth="12" />
      {strokes.map((s, i) => (
        <path key={i} d={spline(s)} />
      ))}
    </Ink>
  </>
);

export default function App() {
  return (
    <Screen>
      <GlobalStyle />
      <Grads />
      <Desktop>
        {desktopItems.map((d) => (
          <DesktopItem key={d.art}>
            <svg width="64" height="64" viewBox="0 0 64 64" overflow="visible">
              {desktopArt[d.art]}
              {d.link && <Shortcut />}
            </svg>
            <DesktopLabel>{d.label}</DesktopLabel>
          </DesktopItem>
        ))}
      </Desktop>
      <Browser>
        <ChromeBar />
        <Jenkins />
      </Browser>
      <DocWindow />
      <Handwriting />
    </Screen>
  );
}
